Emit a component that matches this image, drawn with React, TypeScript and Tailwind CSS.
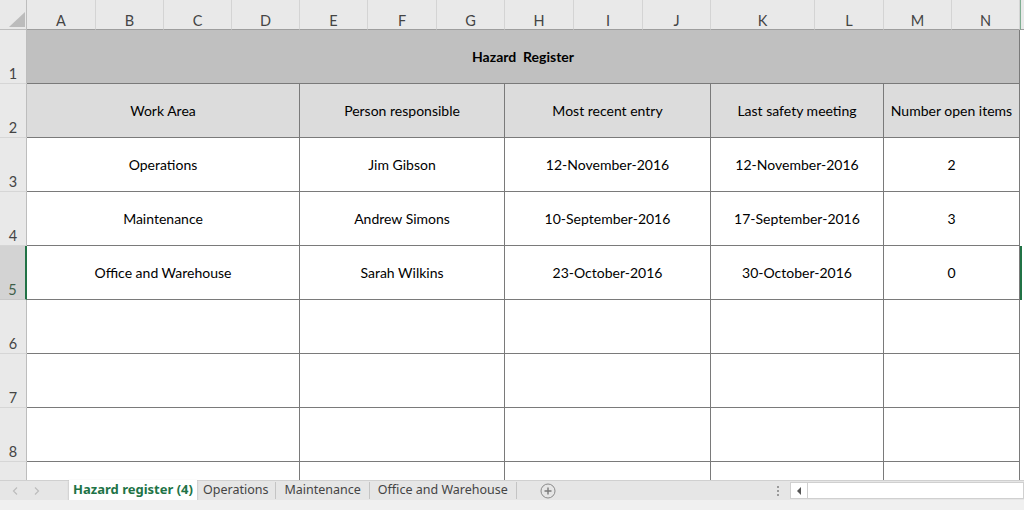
import React from 'react'

const cols = ['A', 'B', 'C', 'D', 'E', 'F', 'G', 'H', 'I', 'J', 'K', 'L', 'M', 'N']

// merged groups: A-D, E-G, H-J, K-L, M-N
const groups = ['col-span-4', 'col-span-3', 'col-span-3', 'col-span-2', 'col-span-2']

const headings = ['Work Area', 'Person responsible', 'Most recent entry', 'Last safety meeting', 'Number open items']

const rows: string[][] = [
    ['Operations', 'Jim Gibson', '12-November-2016', '12-November-2016', '2'],
    ['Maintenance', 'Andrew Simons', '10-September-2016', '17-September-2016', '3'],
    ['Office and Warehouse', 'Sarah Wilkins', '23-October-2016', '30-October-2016', '0'],
    ['', '', '', '', ''],
    ['', '', '', '', ''],
    ['', '', '', '', ''],
]

const RowHead = ({ n, active }: { n: string; active?: boolean }) => (
    <div
        className={
            active
                ? 'flex items-end justify-center pb-[1px] leading-[16px] bg-[#d3d3d3] border-b border-[#c8c8c8] border-r-2 border-r-[#217346] text-[#3f5f4a] text-[14.5px]'
                : 'flex items-end justify-center pb-[1px] leading-[16px] bg-[#e9e9e9] border-b border-[#d6d6d6] border-r border-r-[#bdbdbd] text-[#444] text-[14.5px]'
        }
    >
        {n}
    </div>
)

const App = () => {
    return (
        <div className="w-[1024px] h-[510px] overflow-hidden flex flex-col bg-white text-black" style={{ fontFamily: 'Lato, "Liberation Sans", sans-serif' }}>
            <div className="grid grid-cols-[27px_69px_68px_68px_68px_68px_69px_68px_69px_69px_68px_104px_69px_68px_68px_1fr] grid-rows-[30px_repeat(8,54px)_18px] h-[480px] overflow-hidden">
                {/* column headers */}
                <div className="relative bg-[#e9e9e9] border-b border-r border-[#bdbdbd]">
                    <svg width="17" height="15" viewBox="0 0 17 15" className="absolute left-[9px] bottom-[2px]">
                        <polygon points="16,0 16,15 0,15" fill="#bcbcbc" />
                    </svg>
                </div>
                {cols.map((c) => (
                    <div key={c} className="flex items-end justify-center pb-0 leading-[16px] bg-[#e9e9e9] border-b border-b-[#9e9e9e] border-r border-r-[#d4d4d4] text-[#444] text-[14.5px]">
                        {c}
                    </div>
                ))}
                <div className="bg-[#e9e9e9] border-b border-b-[#9e9e9e] border-l border-l-[#7fae92]" />

                {/* row 1 */}
                <RowHead n="1" />
                <div className="col-span-14 flex items-center justify-center bg-[#c0c0c0] border-b border-r border-[#7a7a7a] font-bold text-[14px] whitespace-pre">
                    Hazard  Register
                </div>
                <div />

                {/* row 2 */}
                <RowHead n="2" />
                {headings.map((h, i) => (
                    <div key={h} className={`${groups[i]} flex items-center justify-center bg-[#dcdcdc] border-b border-r border-[#7a7a7a] text-[14px]`}>
                        {h}
                    </div>
                ))}
                <div />

                {rows.map((r, ri) => {
                    const active = ri === 2
                    return (
                        <React.Fragment key={ri}>
                            <RowHead n={String(ri + 3)} active={active} />
                            {r.map((v, i) => (
                                <div key={i} className={`${groups[i]} flex items-center justify-center border-b border-r border-[#7a7a7a] text-[14px]`}>
                                    {v}
                                </div>
                            ))}
                            <div className={active ? 'border-l-2 border-[#217346]' : ''} />
                        </React.Fragment>
                    )
                })}

                {/* row 9, partially visible */}
                <div className="bg-[#e9e9e9] border-r border-[#bdbdbd]" />
                {groups.map((g, i) => (
                    <div key={i} className={`${g} border-r border-[#7a7a7a]`} />
                ))}
                <div />
            </div>

            {/* sheet tabs */}
            <div className="h-[20px] flex items-stretch bg-[#e6e6e6] border-t border-[#d0d0d0] text-[12.5px] text-[#444]" style={{ fontFamily: '"Noto Sans", "Open Sans", sans-serif' }}>
                <div className="w-[69px] flex items-center">
                    <svg width="6" height="8" viewBox="0 0 6 8" className="ml-[12px]">
                        <path d="M5 0.5 L1.5 4 L5 7.5" fill="none" stroke="#bdbdbd" strokeWidth="1.2" />
                    </svg>
                    <svg width="6" height="8" viewBox="0 0 6 8" className="ml-[16px]">
                        <path d="M1 0.5 L4.5 4 L1 7.5" fill="none" stroke="#bdbdbd" strokeWidth="1.2" />
                    </svg>
                </div>
                <div className="w-[128px] -mt-px flex items-center justify-center bg-white shadow-[0_1px_2px_rgba(0,0,0,0.25)] font-bold text-[13px] text-[#217346] whitespace-nowrap">
                    Hazard register (4)
                </div>
                <div className="pl-[6px] pr-[7px] flex items-center border-r border-[#c4c4c4] my-[1px] whitespace-nowrap">Operations</div>
                <div className="px-[8px] flex items-center border-r border-[#c4c4c4] my-[1px] whitespace-nowrap">Maintenance</div>
                <div className="px-[8px] flex items-center border-r border-[#c4c4c4] my-[1px] whitespace-nowrap">Office and Warehouse</div>
                <div className="w-[62px] flex items-center justify-center">
                    <svg width="16" height="16" viewBox="0 0 16 16">
                        <circle cx="8" cy="8" r="7" fill="none" stroke="#8a8a8a" strokeWidth="1" />
                        <path d="M8 4.5 V11.5 M4.5 8 H11.5" stroke="#7a7a7a" strokeWidth="1.4" />
                    </svg>
                </div>
                <div className="flex-1" />
                <div className="w-[16px] flex flex-col items-center justify-center gap-[2px]">
                    <span className="w-[2px] h-[2px] bg-[#9a9a9a]" />
                    <span className="w-[2px] h-[2px] bg-[#9a9a9a]" />
                    <span className="w-[2px] h-[2px] bg-[#9a9a9a]" />
                </div>
                <div className="w-[234px] ml-[4px] my-[1px] flex bg-white border border-[#d0d0d0]">
                    <div className="w-[17px] flex items-center justify-center border-r border-[#d0d0d0]">
                        <svg width="5" height="8" viewBox="0 0 5 8">
                            <polygon points="4,0 4,8 0,4" fill="#555" />
                        </svg>
                    </div>
                    <div className="flex-1" />
                </div>
            </div>
            <div className="flex-1 bg-[#f0f0f0]" />
        </div>
    )
}

export default App
